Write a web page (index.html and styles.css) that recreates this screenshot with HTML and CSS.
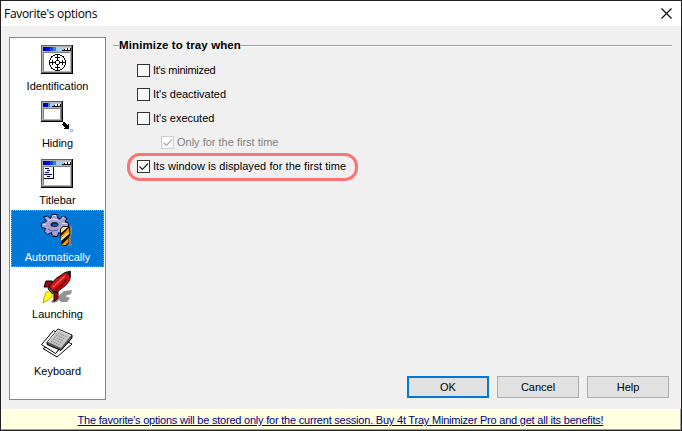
FILE: index.html
```html
<!DOCTYPE html>
<html lang="en">
<head>
<meta charset="utf-8">
<title>Favorite's options</title>
<link rel="stylesheet" href="styles.css">
</head>
<body>
<div class="window">
  <header class="titlebar">
    <span class="title">Favorite's options</span>
    <svg class="close" viewBox="0 0 11 11"><path d="M.5 .5l10 10M10.5 .5l-10 10"/></svg>
  </header>
  <main class="content">
    <nav class="pages">
      <div class="page">
        <svg class="icon" viewBox="0 -2 32 34" shape-rendering="crispEdges">
          <path fill="#000" d="M0 0h32v29H0z"/><path fill="#606060" d="M0 0h31v28H0z"/><path fill="#b4b4b4" d="M1 1h29v26H1z"/>
          <path fill="#808080" d="M2 7h27v19H2z"/><path fill="#fff" d="M3 8h26v18H3z"/>
          <path fill="#a6caf0" d="M2 2h28v4H2z"/><path fill="#0000a0" d="M2 2h3v4H2z"/><path fill="#0000ff" d="M5 2h4v4H5z"/><path fill="#0a4ac8" d="M9 2h3v4H9z"/><path fill="#4080c0" d="M12 2h3v4h-3z"/>
          <path fill="#000" d="M21 5h9v1h-9zM23 4h1v1h-1zM26 3h1v2h-1zM29 3h1v2h-1z"/><path fill="#fff" d="M24 3h2v2h-2zM27 3h2v2h-2z"/>
          <g fill="none" stroke="#000"><circle cx="16.5" cy="17.5" r="8"/><circle cx="16.5" cy="17.5" r="2"/><path d="M16.5 9v7M16.5 19v7M8 17.5h7M18 17.5h7M14 12.5h5M14 22.5h5M11.500 15v5M21.500 15v5"/></g>
        </svg>
        <span class="label">Identification</span>
      </div>
      <div class="page">
        <svg class="icon" viewBox="0 -2 32 34" shape-rendering="crispEdges">
          <path fill="#000" d="M0-1h22v21H0z"/><path fill="#606060" d="M0-1h21v20H0z"/><path fill="#b4b4b4" d="M1 0h19v18H1z"/>
          <path fill="#808080" d="M2 6h18v11H2z"/><path fill="#fff" d="M3 7h16v10H3z"/>
          <path fill="#a6caf0" d="M2 1h18v4H2z"/><path fill="#0000c0" d="M2 1h5v4H2z"/><path fill="#4080c0" d="M7 1h2v4H7z"/>
          <path fill="#000" d="M11 4h9v1h-9zM13 3h1v1h-1zM16 2h1v2h-1zM19 2h1v2h-1z"/><path fill="#fff" d="M14 2h2v2h-2zM17 2h2v2h-2z"/>
          <path fill="#000" d="M22 20h2v1h1v1h1v1h1v-1h1v5h-5v-1h1v-1h-1v-1h-1v-1h-1v-1h1z"/>
          <path fill="#90c0f0" d="M29 27h3v3h-3z"/><path fill="#fff" d="M30 28h1v1h-1z"/>
        </svg>
        <span class="label">Hiding</span>
      </div>
      <div class="page">
        <svg class="icon" viewBox="0 -2 32 34" shape-rendering="crispEdges">
          <path fill="#000" d="M0 0h32v29H0z"/><path fill="#606060" d="M0 0h31v28H0z"/><path fill="#b4b4b4" d="M1 1h29v26H1z"/>
          <path fill="#808080" d="M2 7h27v19H2z"/><path fill="#fff" d="M3 8h26v18H3z"/>
          <path fill="#a6caf0" d="M2 2h28v4H2z"/><path fill="#0000a0" d="M2 2h3v4H2z"/><path fill="#0000ff" d="M5 2h4v4H5z"/><path fill="#0a4ac8" d="M9 2h3v4H9z"/><path fill="#4080c0" d="M12 2h3v4h-3z"/>
          <path fill="#000" d="M21 5h9v1h-9zM23 4h1v1h-1zM26 3h1v2h-1zM29 3h1v2h-1z"/><path fill="#fff" d="M24 3h2v2h-2zM27 3h2v2h-2z"/>
          <path fill="#000" d="M12 8h1v12H3v-1h9z"/><path fill="#000090" d="M4 9h4v1H4zM6 11h3v1H6zM4 13h4v1H4zM3 15h8v1H3zM6 17h3v1H6z"/>
        </svg>
        <span class="label">Titlebar</span>
      </div>
      <div class="page selected">
        <svg class="icon" viewBox="0 -2 32 34">
          <path fill="#a4a4d4" stroke="#08082c" d="M11-1.500h5l1 4 2 .5 3-3 4 2-2 4 3.500 1v4l-4 .5-1 3-3 3-2-1-1 4h-5l-1-4-4 2-3-3 1-3-4-1V7l4-1 1-1-3-4 4-1 3 2.500z"/>
          <path fill="none" stroke="#dedeff" d="M12-.5h3M7 5l4-2 6 1M2 8.500h3M21 2l2-1M21 7.500h5"/>
          <path fill="none" stroke="#60609a" d="M7 13l4 2 6-1M23 11.500h3M11 19.500h3"/>
          <ellipse cx="13.500" cy="8.500" rx="4" ry="2.500" fill="#20204a"/><path fill="#0060b0" d="M12 8h4v2h-4z"/>
          <path fill="#808080" d="M28 10h3v7l-1 3v8h1v2h-4z"/>
          <path fill="#101010" d="M19 13l3-3h6l1 2v7l-1 2v6l-3 3-5-1v-6l-1-1z"/>
          <path fill="#ffe070" d="M20 13l2-2 5 0-7 6zM20 22l8-7v3l-8 7z"/><path fill="#f8a000" d="M20 20l8-8v3l-8 7zM20.500 29l7-7v4l-3 3z"/>
        </svg>
        <span class="label">Automatically</span>
      </div>
      <div class="page">
        <svg class="icon" viewBox="0 -2 32 34">
          <path fill="#929292" d="M31 17l-8 1-7 6-6 4 1 2 5-1 2-2 2 2h6l3-4-5-2 6-2z"/>
          <path fill="#b00000" stroke="#000" d="M11.500 8H5l-2 6h5zM17 18v7l-4 3.500V21z"/>
          <path fill="#dc1010" stroke="#000" d="M29.500-1.500L24-.5l-9 6-6 7-.5 3 4 4 4-1 8-6 4-5 1-5z"/>
          <path fill="#222" d="M30-2l-6 1 5 5 1-2z"/>
          <path fill="none" stroke="#800000" stroke-width="2" d="M13 18l8-6 5-6"/>
          <path fill="none" stroke="#fff" stroke-dasharray="1.500 .8" d="M12 14L24 3"/>
          <path fill="#555" stroke="#000" stroke-width=".8" d="M8 14l5 5-1 2-5-5z"/>
          <path fill="#ffff18" stroke="#a89400" stroke-width=".8" d="M5 19l3-1 3 3v3l-4 3-5 3 1-5z"/>
        </svg>
        <span class="label">Launching</span>
      </div>
      <div class="page">
        <svg class="icon" viewBox="0 -2 32 34">
          <path fill="#fff" stroke="#000" d="M2 18.500l14 8.500 15-13-8-4z"/>
          <path fill="#fff" stroke="#000" d="M.5 14.500l12-14 14 9-12 14z"/>
          <path fill="#555" stroke="#000" d="M6 12.500L17-1l14 6v3L20 20.500 6 14.500z"/>
          <path fill="#c4c4c4" d="M7 12L17 0l13 5.500L20 18z"/>
          <path fill="none" stroke="#f4f4f4" d="M7 12L17 0l13 5.500"/>
          <path fill="none" stroke="#888" stroke-dasharray="1.500 1" d="M17 3l9 4M15 5l9 4M13.500 7l9 4M12 9l9 4M10 11l9 4"/>
        </svg>
        <span class="label">Keyboard</span>
      </div>
    </nav>
    <section class="panel">
      <h1 class="heading"><span>Minimize to tray when</span></h1>
      <div class="options">
        <label class="option"><i class="box"></i><span class="tight">It's minimized</span></label>
        <label class="option"><i class="box"></i><span>It's deactivated</span></label>
        <label class="option"><i class="box"></i><span>It's executed</span></label>
        <label class="option sub"><i class="box"><svg viewBox="0 0 11 11"><path d="M1.500 5.500l3 3 5.500-6"/></svg></i><span>Only for the first time</span></label>
        <label class="option marked"><i class="box"><svg viewBox="0 0 11 11"><path d="M1.500 5.500l3 3 5.500-6"/></svg></i><span class="loose">Its window is displayed for the first time</span></label>
      </div>
      <div class="buttons">
        <div class="button default">OK</div>
        <div class="button">Cancel</div>
        <div class="button">Help</div>
      </div>
    </section>
  </main>
  <footer class="notice"><a>The favorite's options will be stored only for the current session. Buy 4t Tray Minimizer Pro and get all its benefits!</a></footer>
</div>
</body>
</html>
```
FILE: styles.css
```css
* { box-sizing: border-box; }
body { margin: 0; font: 11px/13px "Liberation Sans", Arial, sans-serif; color: #000; }
.window { width: 682px; height: 431px; border: 1px solid #232126; background: #f0f0f0; display: flex; flex-direction: column; }
.titlebar { height: 25px; background: #fff; display: flex; justify-content: space-between; align-items: center; padding: 0 9px 0 3px; }
.title { font: 12px/16px "Open Sans", "Noto Sans", sans-serif; letter-spacing: -.31px; }
.close { width: 11px; height: 11px; fill: none; stroke: #000; stroke-width: 1.1; }
.content { height: 383px; display: flex; padding: 11px 9px 9px 8px; gap: 7px; }
.pages { width: 97px; height: 363px; border: 1px solid #828790; background: #fff; padding: 1px; flex: none; }
.page { height: 57px; border: 1px solid transparent; padding-top: 3px; display: flex; flex-direction: column; align-items: center; }
.page.selected { background: #0078d7; border: 1px dotted #ff8728; color: #fff; }
.icon { width: 32px; height: 34px; flex: none; margin-right: 1px; }
.label { margin-top: 3px; white-space: nowrap; }
.panel { flex: 1; display: flex; flex-direction: column; }
.heading { margin: 2px 0 0; font-size: 11.5px; line-height: 13px; display: flex; align-items: center; white-space: nowrap; letter-spacing: .12px; }
.heading::before, .heading::after { content: ""; height: 2px; width: 6px; background: linear-gradient(#a0a0a0 50%, #fff 50%); }
.heading::after { flex: 1; }
.options { padding: 6px 0 0 24px; display: flex; flex-direction: column; align-items: flex-start; }
.option { height: 24px; display: flex; align-items: center; gap: 3px; white-space: nowrap; }
.tight { letter-spacing: -.28px; }
.loose { letter-spacing: .06px; }
.box { width: 13px; height: 13px; border: 1px solid #333; background: #fff; display: block; }
.box svg { display: block; width: 11px; height: 11px; fill: none; stroke: #222; stroke-width: 1.2; }
.sub { margin-left: 24px; color: #838383; }
.sub .box { border-color: #ccc; }
.sub svg { stroke: #aaa; }
.marked { width: 231px; height: 28px; margin: -1px 0 0 -10px; padding: 0 0 2px 7px; border: 3px solid #f87575; border-radius: 13px; }
.buttons { margin-top: auto; margin-bottom: 2px; padding-right: 3px; display: flex; justify-content: flex-end; gap: 8px; }
.button { width: 82px; height: 22px; border: 1px solid #adadad; background: #e1e1e1; display: flex; align-items: center; justify-content: center; }
.button.default { border: 2px solid #0078d7; }
.notice { height: 21px; background: #ffffe1; border: solid #a0a0a0; border-width: 0 1px 1px 0; text-align: center; line-height: 22px; white-space: nowrap; }
.notice a { color: #000080; text-decoration: underline; letter-spacing: -.213px; }
```
